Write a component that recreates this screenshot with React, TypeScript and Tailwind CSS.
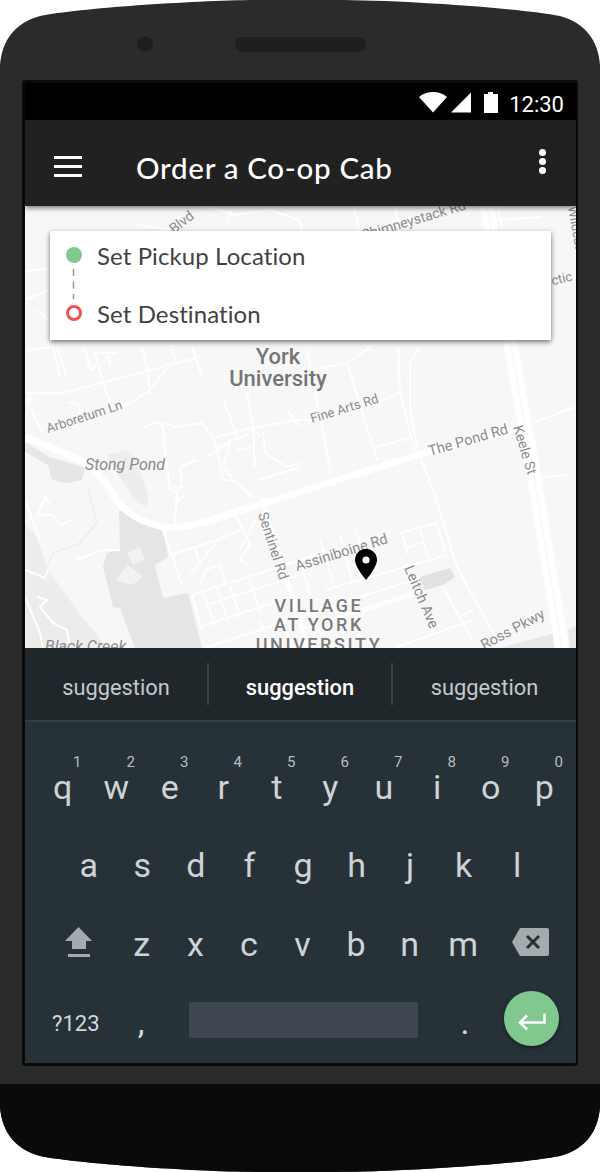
const robotoFont = "font-['Roboto',sans-serif]";

const rowOne = [
  ["q", "1"],
  ["w", "2"],
  ["e", "3"],
  ["r", "4"],
  ["t", "5"],
  ["y", "6"],
  ["u", "7"],
  ["i", "8"],
  ["o", "9"],
  ["p", "0"],
];
const rowTwo = ["a", "s", "d", "f", "g", "h", "j", "k", "l"];
const rowThree = ["z", "x", "c", "v", "b", "n", "m"];

// thin white street lines, in page coordinates
const streets = [
  // top strip
  "M138 225L170 230",
  "M206 206L231 213L227 225M231 215L270 210L299 220L302 230",
  "M354 207L359 230M395 207L399 228M498 220L541 217M498 206L502 228",
  "M25 272L49 268M25 300L49 290M36 310L49 320",
  // north-west campus
  "M28 350L53 347L60 377M57 347L67 378",
  "M83 347L92 367M93 353L117 353M108 355L110 365",
  "M95 353L103 383L112 407M90 358L87 366L92 370L96 364",
  "M27 393L63 393L143 372L200 357",
  "M142 347L148 373L150 393M167 368L150 390L130 403L118 408",
  "M170 345L177 365M192 347L202 377",
  "M30 395L28 403L43 433M25 400L35 400",
  "M68 402L78 404L80 415",
  "M143 427L158 422L163 427L165 453L170 490L177 493L175 523M175 503L185 495",
  "M163 423L177 427L202 423L213 437L217 450L223 480L233 480L253 497",
  "M223 398L237 437M215 437L253 428L260 437M217 447L250 433",
  "M205 457L230 443L223 467L232 478M237 450L252 447",
  "M253 428L297 420L312 420M263 432L265 453L287 467L300 463",
  "M247 393L253 428L255 467M258 480L300 467M287 410L300 427",
  "M180 467L197 460M180 467L182 487L172 488",
  // centre
  "M310 370L347 363L373 345M307 350L331 475M347 363L377 460",
  "M380 402L400 392L415 453M373 448L410 438M398 347L400 390",
  "M420 347L410 363L410 407L417 450M420 457L437 500",
  "M533 478L568 475M535 422L575 407",
  // west of the village
  "M37 515L45 497L50 505M37 515L53 515L60 525L72 520",
  "M75 560L103 550L120 550",
  "M25 597L40 633L43 648M37 597L47 600L40 607L53 623L67 630L70 648",
  "M25 570L45 578L48 570",
  "M25 500L40 540",
  // Village streets
  "M163 530L182 585M170 555L217 540L240 530",
  "M190 575L210 550L218 540M195 548L200 565M200 585L205 570L220 565L226 585",
  "M235 513L250 545L240 560L248 565M255 520L240 550",
  "M192 595L300 560L325 550M200 627L273 603M205 648L360 597L420 578",
  "M192 595L202 630M203 592L215 625M217 588L228 622M250 580L260 612M230 585L240 618M205 605L300 575",
  "M325 590L447 555M362 612L414 595M300 630L420 590M395 648L450 628L473 620",
  "M300 560L312 600M320 540L335 588M340 535L352 580M355 530L372 575",
  "M400 533L435 523L440 533L445 553M402 533L408 555M420 528L428 557M407 548L423 542",
  "M433 490L457 567L497 640M443 587L472 640M460 617L473 610",
  "M260 620L270 648M280 612L292 648M310 603L322 640M330 597L342 632",
];

const mapLabels = [
  { text: "Blvd", x: 174, y: 234, rotate: -38, size: 14 },
  { text: "Chimneystack Rd", x: 363, y: 240, rotate: -16.500, size: 14 },
  { text: "Wildcat Rd", x: 568, y: 207, rotate: 80, size: 13 },
  { text: "Arctic", x: 540, y: 288, rotate: -13, size: 13 },
  { text: "Arboretum Ln", x: 48, y: 433, rotate: -18, size: 13 },
  { text: "Fine Arts Rd", x: 312, y: 423, rotate: -17, size: 13 },
  { text: "The Pond Rd", x: 430, y: 456, rotate: -16, size: 14.500 },
  { text: "Keele St", x: 513, y: 427, rotate: 73, size: 14 },
  { text: "Sentinel Rd", x: 258, y: 514, rotate: 72, size: 14 },
  { text: "Assiniboine Rd", x: 297, y: 571, rotate: -17, size: 14.500 },
  { text: "Leitch Ave", x: 404, y: 568, rotate: 67, size: 14.500 },
  { text: "Ross Pkwy", x: 484, y: 650, rotate: -28, size: 14.500 },
];

function DeviceBody() {
  return (
    <svg className="absolute inset-0" width="600" height="1172" viewBox="0 0 600 1172">
      <path
        d="M0 65C2 40 15 23 40 16C80 8 200 0 265 0L335 0C400 0 520 8 560 16C585 23 598 40 600 65L600 1107C598 1132 585 1149 560 1156C520 1164 400 1172 335 1172L265 1172C200 1172 80 1164 40 1156C15 1149 2 1132 0 1107Z"
        fill="#2b2b2b"
      />
      <path
        d="M0 1084L600 1084L600 1107C598 1132 585 1149 560 1156C520 1164 400 1172 335 1172L265 1172C200 1172 80 1164 40 1156C15 1149 2 1132 0 1107Z"
        fill="#0a0a0a"
      />
    </svg>
  );
}

function StatusBar() {
  return (
    <div className="flex h-[37px] items-center justify-end bg-black pr-[12px] pt-[6px]">
      <svg width="80" height="22" viewBox="0 0 80 22" className="mb-[5px] mr-[10px]">
        <path d="M0 6C4 2.500 8.500 1 14 1C19.500 1 24 2.500 28 6L14 21.500Z" fill="#fff" />
        <path d="M52 1.500L52 21.500L32 21.500Z" fill="#fff" />
        <path d="M65 3L69 3L69 1L74 1L74 3L79 3L79 22L65 22Z" fill="#fff" />
      </svg>
      <span className={`text-[22px] leading-none text-white ${robotoFont}`}>12:30</span>
    </div>
  );
}

function AppBar() {
  return (
    <div className="relative z-10 flex h-[86px] items-center bg-[#212121] pl-[29px] pr-[30px] pt-[6px] shadow-[0_2px_5px_rgba(0,0,0,0.5)]">
      <div className="flex w-[28px] flex-col gap-[6px]">
        <span className="h-[3px] bg-white" />
        <span className="h-[3px] bg-white" />
        <span className="h-[3px] bg-white" />
      </div>
      <h1 className="ml-[54px] flex-1 pt-[4px] font-['Lato',sans-serif] text-[29.500px] font-medium leading-none tracking-[0.7px] text-white">
        Order a Co-op Cab
      </h1>
      <div className="-mt-[10px] flex flex-col gap-[2px]">
        <span className="h-[7px] w-[7px] rounded-full bg-white" />
        <span className="h-[7px] w-[7px] rounded-full bg-white" />
        <span className="h-[7px] w-[7px] rounded-full bg-white" />
      </div>
    </div>
  );
}

function MapDrawing() {
  return (
    <svg className="absolute inset-0" width="552" height="442" viewBox="25 206 552 442">
      <rect x="25" y="206" width="552" height="442" fill="#f7f7f7" />
      {/* parks and water */}
      <path d="M25 523L37 537L48 570L77 610L107 648L25 648Z" fill="#ececec" />
      <path
        d="M119 510L163 530L168 557L155 565L163 598L188 593L202 648L135 648L120 608L113 607L103 567L107 553L120 550Z"
        fill="#e5e5e5"
      />
      <path d="M127 553L140 547L145 560L133 565ZM128 565L143 577L132 585L115 580Z" fill="#f2f2f2" />
      <path d="M25 442L50 457L85 468L82 480L67 483L52 480L48 465L25 452Z" fill="#e6e6e6" />
      <path d="M107 455L127 450L135 458L148 495L148 502L145 507L133 497L118 475Z" fill="#ededed" />
      <path d="M420 577L450 568L455 577L443 585L425 590Z" fill="#e2e2e2" />
      <path d="M500 648L555 633L557 648ZM568 630L577 625L577 648L570 648Z" fill="#e8e8e8" />
      {/* faint park paths */}
      <path d="M88 490L97 522L80 543L53 553L45 570" fill="none" stroke="#ececec" strokeWidth="1.200" />
      {/* streets */}
      {streets.map((d) => (
        <path key={d} d={d} fill="none" stroke="#ffffff" strokeWidth="2" />
      ))}
      {/* main roads */}
      <path
        d="M25 437L74 457C90 464 102 478 110 490C118 504 130 520 163 527C185 530 205 522 233 513L300 492L417 455L530 425"
        fill="none"
        stroke="#ffffff"
        strokeWidth="7"
      />
      <path d="M487 206L510 340L537 495L562 648" fill="none" stroke="#ffffff" strokeWidth="14" />
      <path d="M487 206L510 340L537 495L562 648" fill="none" stroke="#f9f9f9" strokeWidth="1.500" />
      <path d="M261 497L290 590L308 648" fill="none" stroke="#ffffff" strokeWidth="5" />
      {/* labels */}
      {mapLabels.map((l) => (
        <text
          key={l.text}
          x={l.x}
          y={l.y}
          fontSize={l.size}
          fill="#8c8c8c"
          fontFamily="Roboto, sans-serif"
          transform={`rotate(${l.rotate} ${l.x} ${l.y})`}
        >
          {l.text}
        </text>
      ))}
      <text x="278" y="364" textAnchor="middle" fontSize="22" fontWeight="500" fill="#757575" fontFamily="Roboto, sans-serif">
        York
      </text>
      <text x="278" y="386" textAnchor="middle" fontSize="22" fontWeight="500" fill="#757575" fontFamily="Roboto, sans-serif">
        University
      </text>
      <text x="85" y="470" fontSize="16" fontStyle="italic" fill="#8a8a8a" fontFamily="Roboto, sans-serif">
        Stong Pond
      </text>
      <text x="45" y="652" fontSize="16" fontStyle="italic" fill="#8a8a8a" fontFamily="Roboto, sans-serif">
        Black Creek
      </text>
      <g fontFamily="Roboto, sans-serif" fontSize="18" fontWeight="500" fill="#7a7a7a" textAnchor="middle" letterSpacing="2.600">
        <text x="319" y="612">VILLAGE</text>
        <text x="319" y="631">AT YORK</text>
        <text x="319" y="651">UNIVERSITY</text>
      </g>
      {/* location pin */}
      <path
        d="M366 549C358.500 549 355 555 355 560C355 567 366 580 366 580C366 580 377 567 377 560C377 555 373.500 549 366 549Z"
        fill="#000"
      />
      <circle cx="366" cy="560" r="3.600" fill="#f5f5f5" />
    </svg>
  );
}

function RouteCard() {
  return (
    <div className="relative mx-[25px] mt-[25px] h-[109px] bg-white shadow-[0_2px_5px_rgba(0,0,0,0.55)]">
      <div className="flex h-full flex-col pl-[16px] pt-[10px] font-['Lato',sans-serif] text-[24px] leading-[28px] tracking-[0.1px] text-[#424242]">
        <div className="flex h-[28px] items-center">
          <span className="h-[16px] w-[16px] rounded-full bg-[#81c88f]" />
          <span className="ml-[15px] pt-[2px]">Set Pickup Location</span>
        </div>
        <svg width="16" height="30" viewBox="0 0 16 30" className="block">
          <path d="M7.500 0V30" stroke="#999" strokeWidth="1.500" strokeDasharray="7 5.500" />
        </svg>
        <div className="flex h-[28px] items-center">
          <span className="h-[16px] w-[16px] rounded-full border-[3px] border-[#ef5350]" />
          <span className="ml-[15px] pt-[2px]">Set Destination</span>
        </div>
      </div>
    </div>
  );
}

function Suggestions() {
  return (
    <div className={`flex h-[74px] items-center border-b-2 border-[#333e45] bg-[#20272b] text-[21.800px] ${robotoFont}`}>
      <span className="w-[182px] pt-[8px] text-center text-[#c5c9cb]">suggestion</span>
      <span className="h-[42px] w-[2px] bg-[#3c4347]" />
      <span className="w-[182px] pt-[8px] text-center font-medium text-white">suggestion</span>
      <span className="h-[42px] w-[2px] bg-[#3c4347]" />
      <span className="flex-1 pt-[8px] text-center text-[#c5c9cb]">suggestion</span>
    </div>
  );
}

function Key({ label }: { label: string }) {
  return <span className="block text-center text-[34px] font-normal leading-none text-[#cfd3d5]">{label}</span>;
}

function Keyboard() {
  return (
    <div className={`flex h-[341px] flex-col bg-[#263238] ${robotoFont}`}>
      <div className="grid grid-cols-10 pl-[11px] pr-[5px] pt-[48px]">
        {rowOne.map(([letter, digit]) => (
          <div key={letter} className="relative">
            <Key label={letter} />
            <span className="absolute -top-[15px] right-[8px] text-[15px] leading-none text-[#b8bdc0]">{digit}</span>
          </div>
        ))}
      </div>
      <div className="mt-[44px] grid grid-cols-9 pl-[37px] pr-[32px]">
        {rowTwo.map((letter) => (
          <Key key={letter} label={letter} />
        ))}
      </div>
      <div className="mt-[45px] flex items-center pl-[40px]">
        <svg width="28" height="30" viewBox="0 0 28 30" className="mb-[4px] mr-[22px]">
          <path d="M13.500 0L27 14L21 14L21 22L7 22L7 14L0 14Z" fill="#a5aaad" />
          <rect x="3" y="27" width="22" height="3" fill="#a5aaad" />
        </svg>
        <div className="grid w-[375px] grid-cols-7">
          {rowThree.map((letter) => (
            <Key key={letter} label={letter} />
          ))}
        </div>
        <svg width="37" height="28" viewBox="0 0 37 28" className="mb-[5px] ml-[22px]">
          <path d="M8 0L35 0Q37 0 37 2L37 26Q37 28 35 28L8 28L0 14Z" fill="#a5aaad" />
          <path d="M15 8L27 20M27 8L15 20" stroke="#263238" strokeWidth="3" />
        </svg>
      </div>
      <div className="mt-[30px] flex h-[55px] items-center pl-[27px]">
        <span className="w-[79px] pt-[11px] text-[22px] leading-none text-[#d5d8d9]">?123</span>
        <span className="w-[20px] pt-[6px] text-center text-[34px] leading-none text-[#d5d8d9]">,</span>
        <span className="ml-[38px] mt-[3px] h-[36px] w-[229px] rounded-[2px] bg-[#3e474f]" />
        <span className="ml-[37px] w-[20px] pt-[6px] text-center text-[34px] leading-none text-[#d5d8d9]">.</span>
        <span className="ml-[29px] flex h-[55px] w-[55px] items-center justify-center rounded-full bg-[#81c88f] shadow-[0_2px_4px_rgba(0,0,0,0.4)]">
          <svg width="30" height="24" viewBox="0 0 30 24">
            <path d="M27.500 6.500V15.500H3M10 8.500L3 15.500L10 22.500" fill="none" stroke="#fff" strokeWidth="2.500" />
          </svg>
        </span>
      </div>
    </div>
  );
}

export default function App() {
  return (
    <div className="relative h-[1172px] w-[600px] overflow-hidden bg-white">
      <DeviceBody />
      <div className="relative flex h-full flex-col px-[22px] pt-[80px]">
        {/* camera + speaker */}
        <div className="absolute left-[137px] top-[36px] h-4 w-4 rounded-full bg-[#1f1f1f]" />
        <div className="absolute left-[235px] top-[37px] h-[15px] w-[131px] rounded-full bg-[#1f1f1f]" />

        <div className="flex h-[986px] flex-col overflow-hidden rounded-[3px] border-[3px] border-r-[2px] border-[#0a0a0a]">
          <StatusBar />
          <AppBar />
          <div className="relative h-[442px] overflow-hidden">
            <MapDrawing />
            <RouteCard />
          </div>
          <Suggestions />
          <Keyboard />
        </div>
      </div>
    </div>
  );
}
